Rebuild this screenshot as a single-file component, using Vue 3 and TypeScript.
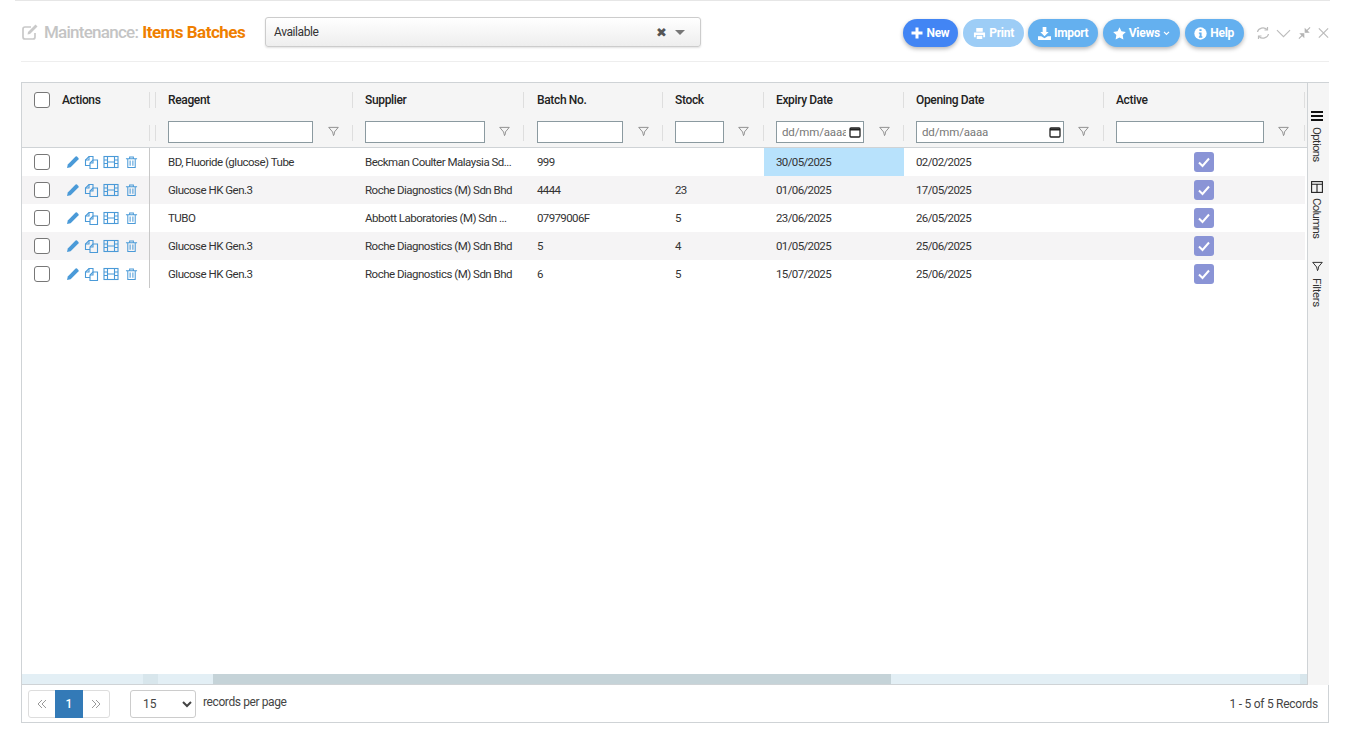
<script setup lang="ts">
type Batch = {
  reagent: string
  supplier: string
  batch: string
  stock: string
  expiry: string
  opening: string
  warn?: boolean
}

const columns = [
  { label: "Reagent", input: 145, gap: 15 },
  { label: "Supplier", input: 120, gap: 14 },
  { label: "Batch No.", input: 86, gap: 15 },
  { label: "Stock", input: 49, gap: 14 },
  { label: "Expiry Date", input: 88, gap: 15, date: true },
  { label: "Opening Date", input: 148, gap: 14, date: true },
  { label: "Active", input: 148, gap: 14 }
]

const batches: Batch[] = [
  { reagent: "BD, Fluoride (glucose) Tube", supplier: "Beckman Coulter Malaysia Sd...", batch: "999", stock: "", expiry: "30/05/2025", opening: "02/02/2025", warn: true },
  { reagent: "Glucose HK Gen.3", supplier: "Roche Diagnostics (M) Sdn Bhd", batch: "4444", stock: "23", expiry: "01/06/2025", opening: "17/05/2025" },
  { reagent: "TUBO", supplier: "Abbott Laboratories (M) Sdn ...", batch: "07979006F", stock: "5", expiry: "23/06/2025", opening: "26/05/2025" },
  { reagent: "Glucose HK Gen.3", supplier: "Roche Diagnostics (M) Sdn Bhd", batch: "5", stock: "4", expiry: "01/05/2025", opening: "25/06/2025" },
  { reagent: "Glucose HK Gen.3", supplier: "Roche Diagnostics (M) Sdn Bhd", batch: "6", stock: "5", expiry: "15/07/2025", opening: "25/06/2025" }
]
</script>

<template>
  <div class="page">
    <header class="topbar">
      <div class="title">
        <svg class="title-icon" viewBox="0 0 18 18" width="18" height="18" fill="none" stroke="#c9c9c9">
          <path d="M14 10v4a2 2 0 0 1-2 2H4a2 2 0 0 1-2-2V6a2 2 0 0 1 2-2h6" stroke-width="1.7" />
          <path d="M7 9l7.5-7.500 2 2L9 11l-2.500.5z" fill="#c9c9c9" stroke="none" />
        </svg>
        <span class="title-muted">Maintenance:</span>
        <span class="title-main">Items Batches</span>
      </div>
      <div class="status-select">
        <span>Available</span>
        <span class="status-x">✖</span>
        <span class="status-caret" />
      </div>
      <div class="buttons">
        <button class="btn btn--primary">
          <svg viewBox="0 0 12 12" width="12" height="12" fill="#fff"><path d="M4.500 .5h3v4H11.500v3H7.500v4h-3v-4H.5v-3h4z" /></svg>New
        </button>
        <button class="btn btn--disabled">
          <svg viewBox="0 0 14 14" width="13" height="13" fill="#fff"><path d="M3.500 1h7v4h-7zM1 6h12v5h-2V8.500H3V11H1zM4 9.500h6V13H4z" /></svg>Print
        </button>
        <button class="btn">
          <svg viewBox="0 0 14 14" width="13" height="13" fill="#fff"><path d="M5 0h4v5.500h2.500L7 10 2.500 5.500H5zM0 10h3.500L7 12l3.500-2H14v4H0z" /></svg>Import
        </button>
        <button class="btn btn--views">
          <svg viewBox="0 0 14 14" width="13" height="13" fill="#fff"><path d="M7 .3l2.100 4.400 4.700.7-3.400 3.300.8 4.700L7 11.200l-4.200 2.200.8-4.700L.2 5.400l4.700-.7z" /></svg>Views
          <svg viewBox="0 0 8 6" width="7" height="5" fill="none" stroke="#fff" stroke-width="1.500"><path d="M1 1l3 3 3-3" /></svg>
        </button>
        <button class="btn">
          <svg viewBox="0 0 12 12" width="13" height="13"><circle cx="6" cy="6" r="5.700" fill="#fff" /><path d="M5 2h2v1.700H5zM4.500 5h2.500v3.500h.7V10H4.500V8.500h.7V6.300h-.7z" fill="#64b0ef" /></svg>Help
        </button>
      </div>
      <div class="tools">
        <svg viewBox="0 0 14 14" width="14" height="14" fill="none" stroke="#bcbcbc" stroke-width="1.200"><path d="M1.500 6A5.500 5 0 0 1 11 3.500M12.500 8A5.500 5 0 0 1 3 10.500" /><path d="M11.500 1v3h-3M2.500 13v-3h3" /></svg>
        <svg viewBox="0 0 16 14" width="15" height="14" fill="none" stroke="#bcbcbc" stroke-width="1.200"><path d="M1 4l7 7 7-7" /></svg>
        <svg viewBox="0 0 14 14" width="13" height="14" fill="#b4b4b4" stroke="#b4b4b4" stroke-width="1.200"><path d="M13 1L9 5" /><path d="M7.800 2.800v3.400h3.400zM1 13l4-4" /><path d="M2.800 7.800h3.400v3.400z" /></svg>
        <svg viewBox="0 0 14 14" width="13" height="14" fill="none" stroke="#bcbcbc" stroke-width="1.300"><path d="M2 2l10 10M12 2L2 12" /></svg>
      </div>
    </header>

    <section class="panel">
      <div class="panel-body">
        <div class="grid-area">
          <div class="head">
            <div class="grid-row head-row">
              <div class="head-cell head-cell--actions">
                <span class="check" />
                <span class="actions-label">Actions</span>
              </div>
              <div v-for="col in columns" :key="col.label" class="head-cell">{{ col.label }}</div>
            </div>
            <div class="grid-row filter-row">
              <div class="head-cell head-cell--actions" />
              <div v-for="col in columns" :key="col.label" class="head-cell">
                <div class="filter-input" :style="{ width: col.input + 'px' }">
                  <template v-if="col.date">
                    <span class="date-mask">dd/mm/aaaa</span>
                    <svg viewBox="0 0 12 12" width="12" height="12" fill="none" stroke="#222" stroke-width="1.300"><rect x="1" y="2" width="10" height="9" rx="1" /><path d="M1 3.500h10" stroke-width="2" /></svg>
                  </template>
                </div>
                <svg class="funnel" :style="{ marginLeft: col.gap + 'px' }" viewBox="0 0 12 12" width="11" height="11" fill="none" stroke="#8a8a8a"><path d="M.8 1.500h10.400L7 6.500v2L6 10.500 5 6.500z" /></svg>
              </div>
            </div>
          </div>

          <div class="rows">
            <div v-for="(item, i) in batches" :key="i" class="grid-row data-row" :class="{ 'data-row--alt': i % 2 === 1 }">
              <div class="cell cell--actions">
                <span class="check" />
                <span class="row-icons">
                  <svg viewBox="0 0 14 14" width="14" height="14" fill="#4a9ad8"><path d="M1 13l.8-3.600L9.600 1.600a1 1 0 0 1 1.400 0l1.400 1.400a1 1 0 0 1 0 1.400L4.600 12.200z" /></svg>
                  <svg viewBox="0 0 15 15" width="15" height="15" fill="none" stroke="#4a9ad8" stroke-width="1.100"><path d="M6 10.500H1.500V5L5 1.500h4V5" /><path d="M5 1.500V5H1.500" /><path d="M9 5h4.500v8.500h-7.500V8z" /><path d="M9 5v3H6" /></svg>
                  <svg viewBox="0 0 16 14" width="16" height="14" fill="none" stroke="#4a9ad8" stroke-width="1.100"><rect x="1" y="1.500" width="14" height="11" /><path d="M4.500 1.500v11M11.500 1.500v11M1 5h3.500M1 8.500h3.500M11.500 5H15M11.500 8.500H15M4.500 7h7" /></svg>
                  <svg class="trash" viewBox="0 0 14 14" width="13" height="14" fill="none" stroke="#4a9ad8" stroke-width="1.100"><path d="M1 3.500h12M3 3.500v9.500h8V3.500M5 3.500V1.500h4v2M5.500 5.500v5.500M8.500 5.500v5.500" /></svg>
                </span>
              </div>
              <div class="cell">{{ item.reagent }}</div>
              <div class="cell">{{ item.supplier }}</div>
              <div class="cell cell--num">{{ item.batch }}</div>
              <div class="cell cell--num">{{ item.stock }}</div>
              <div class="cell cell--num" :class="{ 'cell--warn': item.warn }">{{ item.expiry }}</div>
              <div class="cell cell--num">{{ item.opening }}</div>
              <div class="cell cell--active">
                <span class="tick">
                  <svg viewBox="0 0 14 14" width="14" height="14" fill="none" stroke="#fff" stroke-width="2"><path d="M2 7.500l3.500 3.500L12 3.500" /></svg>
                </span>
              </div>
            </div>
          </div>

          <div class="hscroll">
            <span class="hscroll-a" />
            <span class="hscroll-b" />
            <span class="hscroll-c" />
            <span class="hscroll-thumb" />
            <span class="hscroll-d" />
            <span class="hscroll-e" />
          </div>
        </div>

        <aside class="side">
          <div class="side-tab">
            <svg viewBox="0 0 12 12" width="12" height="12" fill="#111"><path d="M0 1h12v2H0zM0 5h12v2H0zM0 9h12v2H0z" /></svg>
            <span>Options</span>
          </div>
          <div class="side-tab">
            <svg viewBox="0 0 12 12" width="12" height="12" fill="none" stroke="#222" stroke-width="1.100"><rect x=".6" y=".6" width="10.800" height="10.800" /><path d="M.6 3.200h10.800M6 3.200v8" /></svg>
            <span>Columns</span>
          </div>
          <div class="side-tab side-tab--last">
            <svg viewBox="0 0 12 12" width="11" height="11" fill="none" stroke="#222"><path d="M.8 1.500h10.400L7 6.500v2L6 10.500 5 6.500z" /></svg>
            <span class="side-filters">Filters</span>
          </div>
        </aside>
      </div>

      <footer class="pager">
        <div class="pages">
          <span class="page-btn">
            <svg viewBox="0 0 10 10" width="10" height="10" fill="none" stroke="#999"><path d="M5 1L1 5l4 4M9 1L5 5l4 4" /></svg>
          </span>
          <span class="page-btn page-btn--on">1</span>
          <span class="page-btn">
            <svg viewBox="0 0 10 10" width="10" height="10" fill="none" stroke="#999"><path d="M1 1l4 4-4 4M5 1l4 4-4 4" /></svg>
          </span>
        </div>
        <select class="per-page">
          <option>15</option>
        </select>
        <span class="per-label">records per page</span>
        <span class="total">1 - 5 of 5 Records</span>
      </footer>
    </section>
  </div>
</template>

<style>
html,
body {
  margin: 0;
  background: #fff;
}
</style>

<style scoped>
.page {
  height: 742px;
  box-sizing: border-box;
  padding: 0 19px 0 21px;
  font-family: Roboto, "Liberation Sans", sans-serif;
  font-size: 12px;
  color: #333;
  overflow: hidden;
  background: linear-gradient(#e6e6e6, #e6e6e6) no-repeat 15px 0 / 1315px 1px;
}

.topbar {
  display: flex;
  align-items: center;
  height: 61px;
  border-bottom: 1px solid #eee;
}

.title {
  display: flex;
  align-items: center;
  width: 244px;
  flex: none;
  font-size: 17px;
  font-weight: 500;
  white-space: nowrap;
  margin-top: 3px;
}

.title-icon {
  margin-right: 5px;
}

.title-muted {
  color: #c4c4c4;
  margin-right: 4px;
  letter-spacing: -0.75px;
}

.title-main {
  color: #ef7f00;
  font-weight: 700;
  letter-spacing: -0.5px;
}

.status-select {
  flex: none;
  width: 436px;
  height: 30px;
  box-sizing: border-box;
  display: flex;
  align-items: center;
  padding: 0 15px 0 8px;
  border: 1px solid #ccc;
  border-radius: 3px;
  background: linear-gradient(#fff, #eee);
  box-shadow: 0 1px 2px rgba(0, 0, 0, 0.12);
  color: #333;
  letter-spacing: -0.4px;
  margin-top: 3px;
}

.status-select > span:first-child {
  flex: 1;
}

.status-x {
  font-size: 13px;
  color: #555;
  margin-right: 8px;
}

.status-caret {
  width: 0;
  height: 0;
  border: 5px solid transparent;
  border-top: 5px solid #777;
  border-bottom: 0;
}

.buttons {
  margin-left: auto;
  display: flex;
  gap: 5px;
  margin-top: 5px;
}

.btn {
  height: 28px;
  display: flex;
  align-items: center;
  gap: 3px;
  padding: 0 9.500px;
  border: 0;
  border-radius: 14px;
  background: #64b0ef;
  color: #fff;
  font: 700 12px Roboto, sans-serif;
  letter-spacing: -0.3px;
  box-shadow: 0 2px 4px rgba(0, 0, 0, 0.28);
}

.btn--primary {
  background: #4285f4;
  padding: 0 8.500px;
}

.btn--disabled {
  background: #9dcdf6;
  box-shadow: none;
  padding: 0 10.500px;
  margin-right: -1px;
}

.btn--views {
  padding: 0 10px;
}

.tools {
  display: flex;
  align-items: center;
  gap: 6.500px;
  margin-left: 12px;
  margin-right: -1px;
  margin-top: 5px;
  height: 14px;
}

.panel {
  margin-top: 20px;
  width: 1308px;
  height: 641px;
  box-sizing: border-box;
  border: 1px solid #cfd3d6;
  display: flex;
  flex-direction: column;
}

.panel-body {
  flex: 1;
  min-height: 0;
  display: flex;
}

.grid-area {
  width: 1285px;
  flex: none;
  display: flex;
  flex-direction: column;
  border-right: 1px solid #cfd3d6;
}

.head {
  background: #f5f5f5;
  border-bottom: 1px solid #cfd3d6;
}

.grid-row {
  display: grid;
  grid-template-columns: 128px 203px 171px 139px 101px 140px 200px 201px;
  width: 1283px;
}

.head-row {
  height: 33px;
}

.filter-row {
  height: 31px;
}

.head-cell {
  display: flex;
  align-items: center;
  padding-left: 12px;
  font-weight: 500;
  color: #222;
  letter-spacing: -0.35px;
  position: relative;
  min-width: 0;
}

.head-cell:nth-child(2) {
  padding-left: 18px;
}

.head-cell:nth-child(4) {
  padding-left: 13px;
}

.head-cell::after {
  content: "";
  position: absolute;
  right: 0;
  top: 9px;
  height: 16px;
  border-right: 1px solid #dedede;
}

.head-cell:nth-child(2)::before {
  content: "";
  position: absolute;
  left: 5px;
  top: 9px;
  height: 16px;
  border-left: 1px solid #dedede;
}

.actions-label {
  margin-left: 12px;
}

.filter-input {
  height: 22px;
  box-sizing: border-box;
  border: 1px solid #8b9aa0;
  background: #fff;
  display: flex;
  align-items: center;
  padding: 0 2px 0 5px;
  flex: none;
  overflow: hidden;
}

.date-mask {
  flex: 1;
  min-width: 0;
  margin-right: 3px;
  overflow: hidden;
  white-space: nowrap;
  color: #777;
  font-size: 11.500px;
  font-weight: 400;
  letter-spacing: -0.15px;
}

.filter-input svg,
.funnel {
  flex: none;
}

.rows {
  flex: 1;
  min-height: 0;
}

.data-row {
  height: 28px;
}

.data-row--alt {
  background: #f5f4f5;
}

.cell {
  display: flex;
  align-items: center;
  padding-left: 12px;
  color: #333;
  font-size: 11.500px;
  letter-spacing: -0.5px;
  white-space: nowrap;
  overflow: hidden;
  min-width: 0;
}

.cell:nth-child(2) {
  padding-left: 18px;
}

.cell:nth-child(4) {
  padding-left: 13px;
}

.cell--num {
  letter-spacing: -0.62px;
}

.cell--actions {
  border-right: 1px solid #c8c8c8;
}

.cell--warn {
  background: #b8e2fc;
}

.cell--active {
  padding-left: 90px;
}

.check {
  display: inline-block;
  flex: none;
  width: 16px;
  height: 16px;
  box-sizing: border-box;
  border: 1.500px solid #777;
  border-radius: 3px;
  background: #fff;
}

.row-icons {
  display: flex;
  align-items: center;
  gap: 4px;
  margin-left: 16px;
}

.trash {
  margin-left: 2px;
}

.tick {
  width: 20px;
  height: 20px;
  border-radius: 3px;
  background: #8a94d6;
  display: flex;
  align-items: center;
  justify-content: center;
}

.hscroll {
  height: 10px;
  display: flex;
  flex: none;
  border-bottom: 1px solid #cfd3d6;
  box-sizing: content-box;
}

.hscroll span {
  display: block;
  height: 100%;
}

.hscroll-a {
  width: 121px;
  background: #e3eff5;
}

.hscroll-b {
  width: 15px;
  background: #d8e6ec;
}

.hscroll-c {
  width: 55px;
  background: #e3eff5;
}

.hscroll-thumb {
  width: 678px;
  background: #c5d3d8;
}

.hscroll-d {
  flex: 1;
  background: #e3eff5;
}

.hscroll-e {
  width: 7px;
  background: #d8e6ec;
}

.side {
  width: 21px;
  box-sizing: border-box;
  flex: none;
  background: #f5f5f5;
  display: flex;
  flex-direction: column;
  align-items: center;
  padding: 27px 3px 0 0;
  gap: 19px;
}

.side-tab {
  writing-mode: vertical-rl;
  display: flex;
  align-items: center;
  gap: 5px;
  color: #333;
  font-size: 11.500px;
  letter-spacing: -0.75px;
}

.side-tab--last {
  margin-top: 4px;
  gap: 6px;
}

.side-filters {
  letter-spacing: -0.4px;
}

.pager {
  height: 37px;
  flex: none;
  display: flex;
  align-items: center;
  padding: 0 10px 0 6px;
}

.pages {
  display: flex;
  height: 28px;
  border: 1px solid #ddd;
  border-radius: 3px;
  box-sizing: border-box;
  margin-right: 20px;
}

.page-btn {
  width: 26px;
  display: flex;
  align-items: center;
  justify-content: center;
}

.page-btn--on {
  width: 28px;
  background: #337ab7;
  color: #fff;
  font-weight: 500;
  font-size: 12px;
  height: 28px;
  margin-top: -1px;
}

.per-page {
  width: 66px;
  height: 28px;
  border: 1px solid #ccc;
  border-radius: 3px;
  background: #fff;
  color: #444;
  font: 12px Roboto, sans-serif;
  padding-left: 8px;
}

.per-label {
  margin-left: 7px;
  color: #444;
  margin-top: -3px;
  letter-spacing: -0.4px;
}

.total {
  margin-left: auto;
  color: #444;
  letter-spacing: -0.27px;
}
</style>
